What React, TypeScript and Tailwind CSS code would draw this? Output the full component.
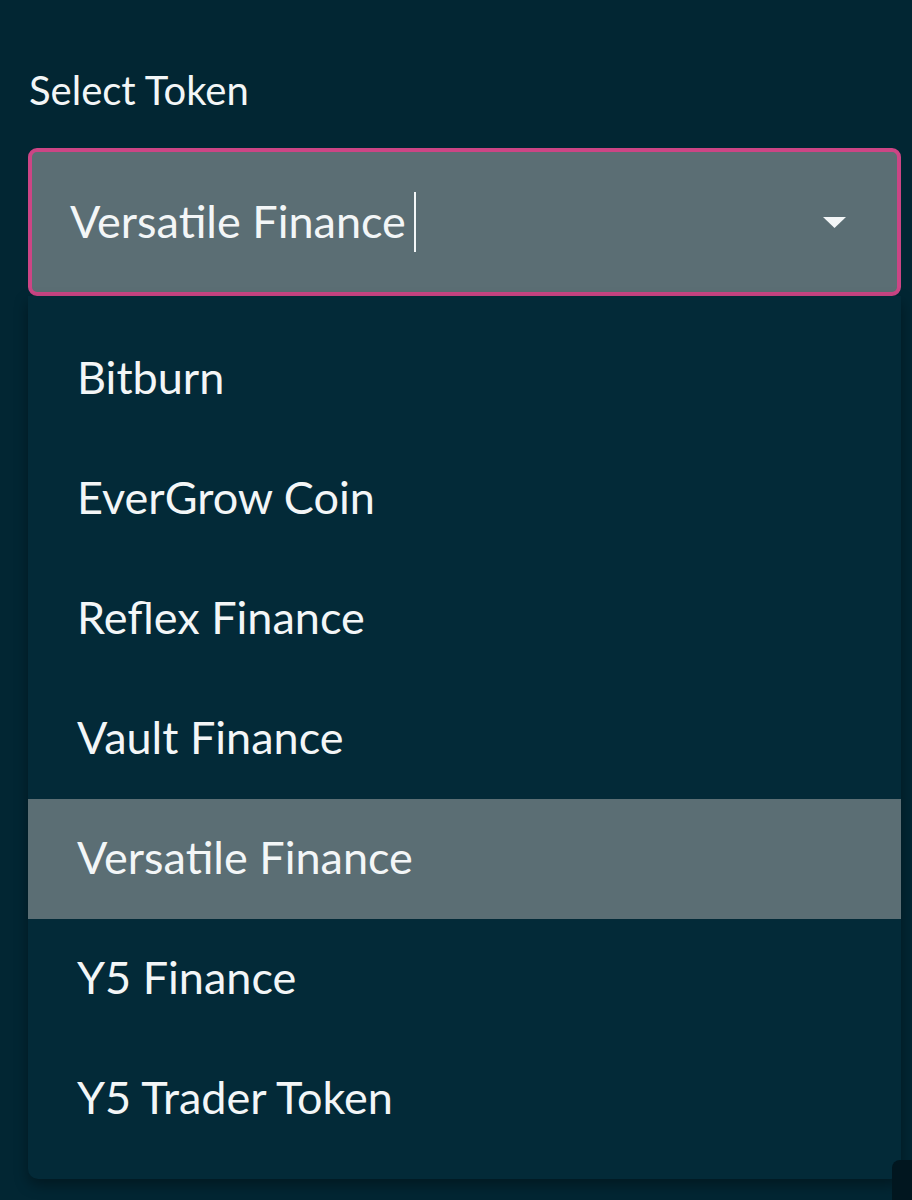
import { useState } from "react";

const tokens = [
  "Bitburn",
  "EverGrow Coin",
  "Reflex Finance",
  "Vault Finance",
  "Versatile Finance",
  "Y5 Finance",
  "Y5 Trader Token",
];

export default function App() {
  const [value, setValue] = useState("Versatile Finance");

  return (
    <div className="relative min-h-[1200px] overflow-hidden bg-[#022633] pl-[28px] pr-[11px] pt-[66px] font-['Lato','Noto_Sans',sans-serif] text-[#f3f6f7]">
      <label className="block pl-px text-[40px] leading-[48px]">Select Token</label>

      <div className="mt-[34px] flex h-[148px] items-center rounded-[9px] border-4 border-[#cc4585] bg-[#5b6e74] pb-[2px] pl-[38px] pr-[51px]">
        <span className="flex flex-1 items-center text-[45px] leading-none">
          <span>{value}</span>
          <span className="ml-[8px] h-[60px] w-[2px] translate-y-px bg-[#f3f6f7]" />
        </span>
        <svg width="23" height="11" viewBox="0 0 23 11" className="translate-y-px">
          <path d="M0 0h23L11.5 11z" fill="#f3f6f7" />
        </svg>
      </div>

      <ul className="rounded-b-[10px] bg-[#032a38] pb-[20px] pt-[23px] shadow-[0_6px_14px_rgba(0,0,0,0.35)]">
        {tokens.map((t) => (
          <li
            key={t}
            onClick={() => setValue(t)}
            className={`flex h-[120px] cursor-pointer items-center pb-[4px] pl-[49px] text-[45px] leading-none ${
              t === value ? "bg-[#5b6e74]" : ""
            }`}
          >
            {t}
          </li>
        ))}
      </ul>

      <div className="absolute bottom-0 right-0 h-[40px] w-[20px] rounded-tl-[8px] bg-[#01161f]" />
    </div>
  );
}
